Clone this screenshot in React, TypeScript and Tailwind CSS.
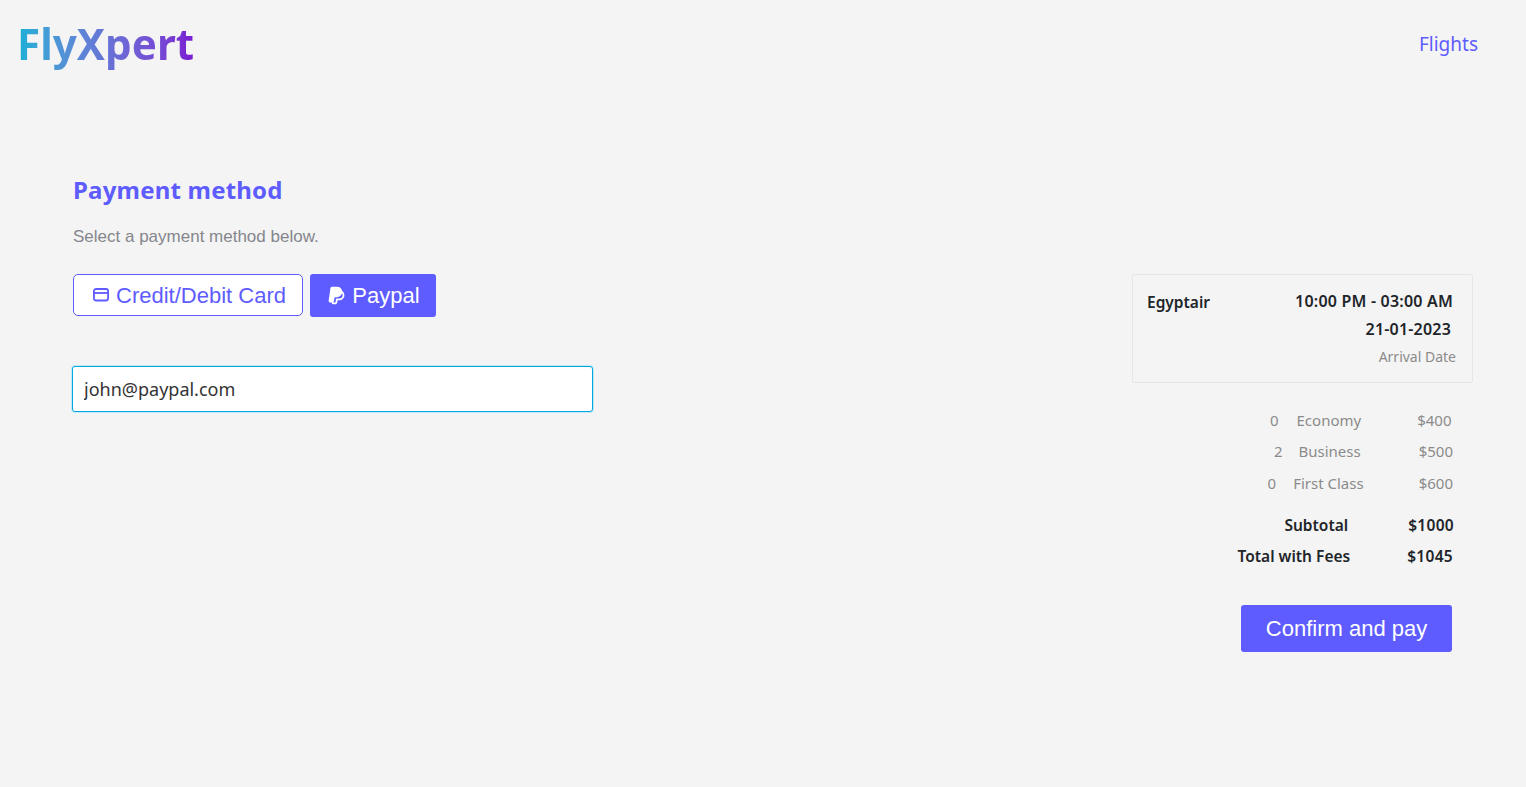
import { TbBrandPaypalFilled } from 'react-icons/tb'

const fare = [
  { count: '0', label: 'Economy', price: '$400', row: 'h-[31px] pr-[21.5px]', gap: 'gap-[18px]', priceGap: 'ml-[56px]' },
  { count: '2', label: 'Business', price: '$500', row: 'h-[31px] pr-[20px]', gap: 'gap-[16px]', priceGap: 'ml-[58px]' },
  { count: '0', label: 'First Class', price: '$600', row: 'h-[32px] pr-[20px]', gap: 'gap-[17px]', priceGap: 'ml-[55px]' },
]

function CardIcon() {
  return (
    <svg width="16" height="14" viewBox="0 0 16 14" fill="none" stroke="#5e5cff" strokeWidth="1.8" className="shrink-0">
      <rect x="0.9" y="1" width="14.2" height="11.5" rx="2.2" />
      <path d="M0.9 5h14.2" />
    </svg>
  )
}

export default function App() {
  return (
    <div className="min-h-screen bg-[#f4f4f4] font-['Noto_Sans',sans-serif] text-[#212529]">
      <header className="flex h-[88px] items-center justify-between pl-[17px] pr-[48px]">
        <span className="bg-gradient-to-r from-[#0fb0d6] to-[#7a1ad2] bg-clip-text text-[42.2px] font-bold leading-[58px] text-transparent">
          FlyXpert
        </span>
        <a className="text-[19px] text-[#5e5cff]">Flights</a>
      </header>

      <main className="flex items-start justify-between pl-[73px] pr-[53px] pt-[85px]">
        <section className="w-[520px]">
          <h1 className="text-[24px] font-bold leading-[33px] tracking-[0.2px] text-[#5e5cff]">Payment method</h1>
          <p className="mt-[21px] font-['Liberation_Sans',sans-serif] text-[17px] leading-[20px] text-[#85868c]">
            Select a payment method below.
          </p>
          <div className="mt-[27px] flex items-start gap-[7px] font-['Liberation_Sans',sans-serif] text-[22px]">
            <button className="flex h-[42px] w-[230px] items-center justify-center gap-[7px] rounded-[5px] border border-[#5e5cff] bg-white pl-[3px] text-[#5e5cff]">
              <CardIcon />
              Credit/Debit Card
            </button>
            <button className="flex h-[43px] w-[126px] items-center justify-center gap-[5px] rounded-[3px] bg-[#5e5cff] text-white">
              <TbBrandPaypalFilled size={21} />
              Paypal
            </button>
          </div>
          <input
            readOnly
            value="john@paypal.com"
            className="-ml-px mt-[49px] h-[46px] w-[521px] rounded-[3px] border-[1.5px] border-[#00a8e0] bg-white px-[11px] text-[18px] text-[#333] outline-none ring-1 ring-[#c4e9f6]"
          />
        </section>

        <aside className="mt-[101px] w-[341px] text-[15px]">
          <div className="h-[109px] rounded-[2px] border border-[#e6e6e6] pl-[14px] pr-[16px] pt-[13px]">
            <div className="flex items-start justify-between pr-[3px] font-semibold">
              <span className="mt-[2px] text-[15.5px] leading-[24px]">Egyptair</span>
              <span className="mt-[1px] text-[16px] leading-[24px] tracking-[0.2px]">10:00 PM - 03:00 AM</span>
            </div>
            <p className="mr-[5px] mt-[3px] text-right text-[16px] font-semibold leading-[24px] tracking-[0.2px]">21-01-2023</p>
            <p className="mt-[4px] text-right text-[14px] leading-[24px] text-[#8b8b8b]">Arrival Date</p>
          </div>

          <div className="mt-[22px] text-[#8b8b8b]">
            {fare.map(f => (
              <div key={f.label} className={`flex items-center justify-end ${f.row}`}>
                <div className={`flex ${f.gap}`}>
                  <span>{f.count}</span>
                  <span>{f.label}</span>
                </div>
                <span className={f.priceGap}>{f.price}</span>
              </div>
            ))}
          </div>

          <div className="mt-[11px] text-[15.5px] font-semibold">
            <div className="flex h-[31px] items-center justify-end pr-[19px]">
              <span>Subtotal</span>
              <span className="ml-[60px] tracking-[0.3px]">$1000</span>
            </div>
            <div className="flex h-[31px] items-center justify-end pr-[20px]">
              <span>Total with Fees</span>
              <span className="ml-[57px] tracking-[0.3px]">$1045</span>
            </div>
          </div>

          <div className="mt-[33px] flex justify-end pr-[21px]">
            <button className="h-[47px] w-[211px] rounded-[3px] bg-[#5e5cff] font-['Liberation_Sans',sans-serif] text-[22px] text-white">
              Confirm and pay
            </button>
          </div>
        </aside>
      </main>
    </div>
  )
}
